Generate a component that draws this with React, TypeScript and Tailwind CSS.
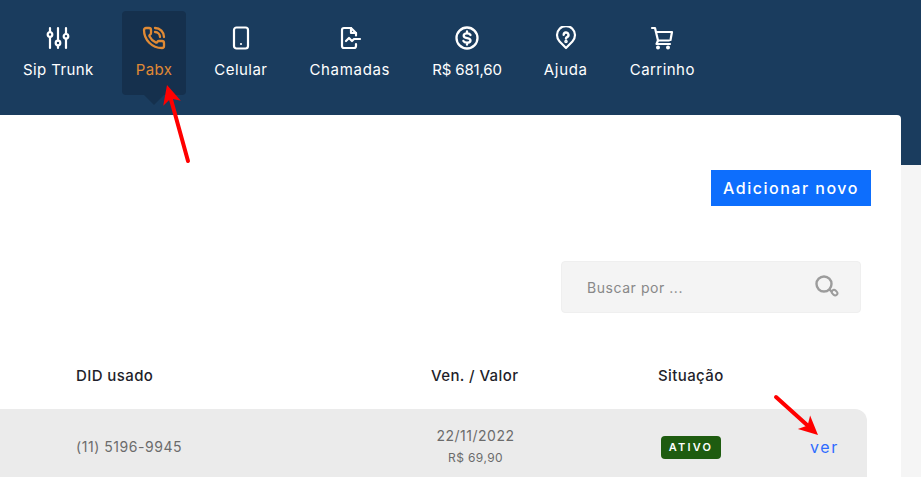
import React from 'react';
import { PhoneCall } from 'lucide-react';

const montserrat = "font-['Inter','Open_Sans',sans-serif]";

function TrunkIcon() {
  return (
    <svg width="24" height="24" viewBox="0 0 24 24" fill="none" stroke="currentColor" strokeWidth="2.2" strokeLinecap="round">
      <path d="M4 2v4M4 11v11M12 2v12.500M12 19.500v2.500M20 2v6M20 12.500v9.500" />
      <circle cx="4" cy="8.500" r="2.300" />
      <circle cx="12" cy="17" r="2.300" />
      <circle cx="20" cy="10.300" r="2.300" />
    </svg>
  );
}

function PhoneIcon() {
  return <PhoneCall size={24} strokeWidth={2.3} />;
}

function MobileIcon() {
  return (
    <svg width="24" height="24" viewBox="0 0 24 24" fill="none" stroke="currentColor" strokeWidth="2.2">
      <rect x="5" y="1.500" width="14" height="21" rx="2.500" />
      <circle cx="12" cy="18" r="1.100" fill="currentColor" stroke="none" />
    </svg>
  );
}

function CallsIcon() {
  return (
    <svg width="24" height="24" viewBox="0 0 24 24" fill="none" stroke="currentColor" strokeWidth="2.2" strokeLinecap="round" strokeLinejoin="round">
      <path d="M18 9.500V7l-5-5H6a2 2 0 0 0-2 2v16a2 2 0 0 0 2 2h10a2 2 0 0 0 2-2v-2" />
      <path d="M13 2v5h5" />
      <path d="M8 15l3-3 3 3 2-2h6" />
    </svg>
  );
}

function MoneyIcon() {
  return (
    <svg width="24" height="24" viewBox="0 0 24 24" fill="none" stroke="currentColor" strokeWidth="2.3" strokeLinecap="round" strokeLinejoin="round">
      <circle cx="12" cy="12" r="10.500" />
      <path d="M15.500 9C15 7.900 14 7.300 12 7.300c-2 0-3.300 1-3.300 2.400 0 3.400 6.800 1.400 6.800 4.700 0 1.400-1.500 2.300-3.500 2.300s-3-.6-3.600-1.800M12 5.300v2M12 16.700v2" />
    </svg>
  );
}

function HelpIcon() {
  return (
    <svg width="24" height="24" viewBox="0 0 24 24" fill="none" stroke="currentColor" strokeWidth="2.2" strokeLinecap="round" strokeLinejoin="round">
      <path d="M12 22 5.600 15.400A9 9 0 1 1 18.400 15.400Z" />
      <path d="M9.700 8.800a2.400 2.400 0 1 1 3.400 2.300c-.7.400-1.100.8-1.100 1.400" strokeWidth="2.400" />
      <circle cx="12" cy="15.500" r=".7" fill="currentColor" />
    </svg>
  );
}

function CartIcon() {
  return (
    <svg width="24" height="24" viewBox="0 0 24 24" fill="none" stroke="currentColor" strokeWidth="2.2" strokeLinecap="round" strokeLinejoin="round">
      <path d="M2 2h3l3 12.500h11" />
      <path d="M6 6h16l-1.500 8" />
      <path d="M8 14.500 6.500 18H20" />
      <circle cx="8" cy="21.500" r=".9" fill="currentColor" />
      <circle cx="18" cy="21.500" r=".9" fill="currentColor" />
    </svg>
  );
}

const NAV = [
  { label: 'Sip Trunk', icon: <TrunkIcon />, track: 'tracking-[0.4px]' },
  { label: 'Pabx', icon: <PhoneIcon />, active: true, track: 'tracking-[0.4px]' },
  { label: 'Celular', icon: <MobileIcon />, track: 'tracking-[0.45px]' },
  { label: 'Chamadas', icon: <CallsIcon />, track: 'tracking-[0.68px]' },
  { label: 'R$ 681,60', icon: <MoneyIcon />, track: 'tracking-[-0.15px]' },
  { label: 'Ajuda', icon: <HelpIcon />, track: 'tracking-[0.7px]' },
  { label: 'Carrinho', icon: <CartIcon />, track: 'tracking-[0.45px]' },
];

function NavItem({ label, icon, active, track }: { label: string; icon: React.ReactNode; active?: boolean; track: string }) {
  return (
    <a
      className={
        active
          ? 'relative flex h-[84px] flex-col items-center rounded-[4px] bg-[#15304d] px-[14px] pt-[15px] text-[#e08a35]'
          : 'relative flex h-[84px] flex-col items-center px-[14px] pt-[15px] text-white'
      }
    >
      {icon}
      <span className={`mt-[9px] whitespace-nowrap text-[15px] leading-[22px] ${track}`}>{label}</span>
      {active && (
        <span className="absolute bottom-[-10px] left-1/2 h-0 w-0 -translate-x-1/2 border-x-[10px] border-t-[10px] border-x-transparent border-t-[#15304d]" />
      )}
    </a>
  );
}

function Arrow({ className, x1, y1, x2, y2 }: { className: string; x1: number; y1: number; x2: number; y2: number }) {
  const angle = Math.atan2(y2 - y1, x2 - x1);
  const len = 21;
  const spread = 0.45;
  const ax = x2 - len * Math.cos(angle - spread);
  const ay = y2 - len * Math.sin(angle - spread);
  const bx = x2 - len * Math.cos(angle + spread);
  const by = y2 - len * Math.sin(angle + spread);
  const mx = x2 - 14 * Math.cos(angle);
  const my = y2 - 14 * Math.sin(angle);
  return (
    <svg className={className} width="921" height="477" viewBox="0 0 921 477" fill="none">
      <path d={`M${x1} ${y1}L${mx} ${my}`} stroke="#ff0000" strokeWidth="4" strokeLinecap="round" />
      <path d={`M${x2} ${y2}L${ax} ${ay}L${mx} ${my}L${bx} ${by}Z`} fill="#ff0000" />
    </svg>
  );
}

export default function App() {
  return (
    <div className={`relative h-[477px] w-[921px] overflow-hidden bg-[#f5f5f5] ${montserrat}`}>
      <header className="h-[165px] bg-[#1a3c5e] pl-[9px] pt-[11px]">
        <nav className="flex gap-[14px]">
          {NAV.map(item => (
            <NavItem key={item.label} {...item} />
          ))}
        </nav>
      </header>

      <main className="relative -mt-[50px] h-[362px] w-[901px] rounded-tr-[4px] bg-white">
        <div className="flex justify-end pr-[30px] pt-[55px]">
          <button className="h-[36px] w-[160px] bg-[#0d6efd] text-[16px] font-medium tracking-[1.5px] text-white">
            Adicionar novo
          </button>
        </div>

        <div className="mt-[55px] flex justify-end pr-[40px]">
          <div className="flex h-[52px] w-[300px] items-center justify-between rounded-[4px] border border-[#efefef] bg-[#f4f4f4] pl-[25px] pr-[21px]">
            <span className="text-[14px] tracking-[0.55px] text-[#888888]">Buscar por ...</span>
            <svg width="24" height="24" viewBox="0 0 24 24" fill="none" stroke="#9c9c9c" strokeWidth="2.4">
              <circle cx="9" cy="9" r="7.500" />
              <path d="M14.500 14.500 17 17" />
              <rect x="16.600" y="15.400" width="6" height="4.400" rx="2.200" transform="rotate(45 19.600 17.600)" strokeWidth="2" />
            </svg>
          </div>
        </div>

        <div className="mt-[50px] grid h-[26px] grid-cols-[355px_227px_1fr] items-center pl-[76px] text-[15px] font-[450] tracking-[0.4px] text-[#1f1f2b]">
          <span>DID usado</span>
          <span>Ven. / Valor</span>
          <span>Situação</span>
        </div>

        <div className="mt-[20px] flex h-[80px] w-[867px] rounded-tr-[12px] bg-[#ebebeb] pl-[76px] text-[#6b6b6b]">
          <span className="mt-[27px] w-[328px] text-[14px] tracking-[0.55px]">(11) 5196-9945</span>
          <div className="mt-[16px] flex w-[143px] flex-col items-center">
            <span className="text-[14px] leading-[22px] tracking-[0.5px]">22/11/2022</span>
            <span className="mt-[1px] text-[12px] leading-[20px] tracking-[0.4px]">R$ 69,90</span>
          </div>
          <span className="ml-[114px] mt-[27px] flex h-[23px] w-[60px] items-center justify-center rounded-[4px] bg-[#1e5c10] text-[11px] font-semibold tracking-[2.2px] text-white">
            ATIVO
          </span>
          <span className="ml-[89px] mt-[26px] text-[16px] tracking-[1.6px] text-[#2f6bff]">ver</span>
        </div>
      </main>

      <Arrow className="pointer-events-none absolute left-0 top-0" x1={188} y1={161} x2={167} y2={85} />
      <Arrow className="pointer-events-none absolute left-0 top-0" x1={776} y1={397} x2={818} y2={435} />
    </div>
  );
}
